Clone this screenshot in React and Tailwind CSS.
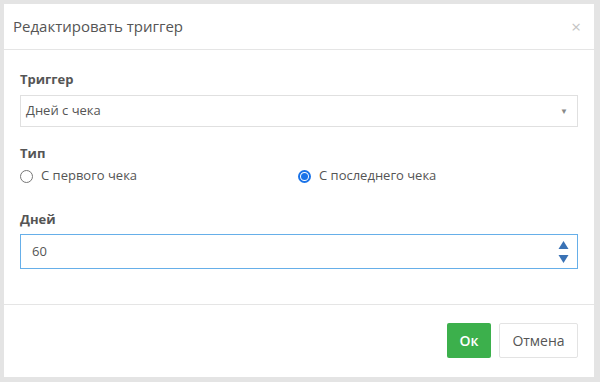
import React from "react";

const Radio = ({ checked, label }) => (
  <label className="flex items-center gap-[8px] text-[13px] text-[#555]">
    {checked ? (
      <span className="w-[13px] h-[13px] rounded-full border-[2px] border-[#1a73e8] flex items-center justify-center">
        <span className="w-[7px] h-[7px] rounded-full bg-[#1a73e8]" />
      </span>
    ) : (
      <span className="w-[13px] h-[13px] rounded-full border border-[#777]" />
    )}
    {label}
  </label>
);

const App = () => {
  return (
    <div
      className="w-[600px] h-[382px] bg-[#e4e4e4] pt-[4px] pl-[4px]"
      style={{ fontFamily: "'Open Sans', sans-serif" }}
    >
      <div className="w-[590px] h-[373px] bg-white flex flex-col">
        {/* HEADER */}
        <div className="h-[46px] flex items-center justify-between pl-[9px] pr-[13px] border-b border-[#e5e5e5]">
          <h4 className="text-[15px] text-[#555]">Редактировать триггер</h4>
          <span className="text-[17px] text-[#c4c4c4] leading-none">×</span>
        </div>

        {/* BODY */}
        <div className="px-4 pt-[20px] pb-[35px] border-b border-[#e5e5e5]">
          <div className="text-[13px] font-bold text-[#555] leading-[18px] mb-[7px]">Триггер</div>
          <div className="h-[32px] border border-[#e0e0e0] flex items-center justify-between pl-[5px] pr-[9px] text-[13px] text-[#555]">
            <span>Дней с чека</span>
            <span className="text-[8px] text-[#888]">▼</span>
          </div>

          <div className="text-[13px] font-bold text-[#555] leading-[18px] mt-[17px]">Тип</div>
          <div className="flex items-center h-[22px] mt-[3px]">
            <div className="w-[278px]">
              <Radio label="С первого чека" />
            </div>
            <Radio checked label="С последнего чека" />
          </div>

          <div className="text-[13px] font-bold text-[#555] leading-[18px] mt-[23px] mb-[6px]">Дней</div>
          <div className="h-[35px] border border-[#66afe9] flex items-center justify-between pl-[11px] pr-[8px] text-[13px] text-[#555]">
            <span>60</span>
            <svg width="11" height="24" viewBox="0 0 11 24">
              <path d="M5.5 1 L10.5 9 L0.5 9 Z" fill="#3a72b5" />
              <path d="M0.5 15 L10.5 15 L5.5 23 Z" fill="#3a72b5" />
            </svg>
          </div>
        </div>

        {/* FOOTER */}
        <div className="flex justify-end gap-[8px] pt-[18px] pr-4">
          <button className="h-[35px] w-[44px] bg-[#3cb04c] rounded-[2px] text-white text-[14px] font-semibold">
            Ок
          </button>
          <button className="h-[35px] w-[79px] border border-[#e3e3e3] rounded-[2px] text-[#555] text-[14px]">
            Отмена
          </button>
        </div>
      </div>
    </div>
  );
};

export default App;
